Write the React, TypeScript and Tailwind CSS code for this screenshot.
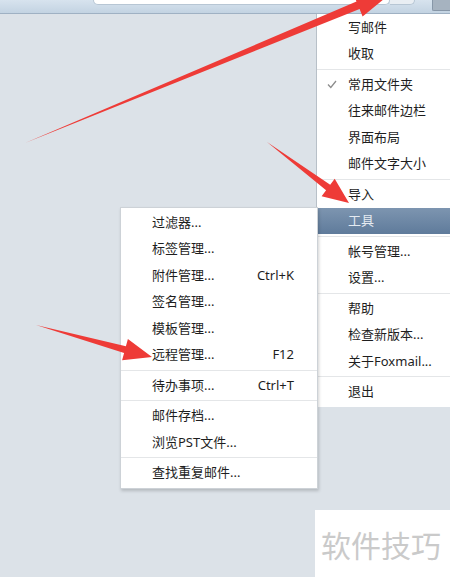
import React from 'react';

type Item = { label?: string; key?: string; checked?: boolean; active?: boolean; sep?: boolean };

const MAIN_MENU: Item[] = [
  { label: '写邮件' },
  { label: '收取' },
  { sep: true },
  { label: '常用文件夹', checked: true },
  { label: '往来邮件边栏' },
  { label: '界面布局' },
  { label: '邮件文字大小' },
  { sep: true },
  { label: '导入' },
  { label: '工具', active: true },
  { sep: true },
  { label: '帐号管理...' },
  { label: '设置...' },
  { sep: true },
  { label: '帮助' },
  { label: '检查新版本...' },
  { label: '关于Foxmail...' },
  { sep: true },
  { label: '退出' },
];

const TOOLS_MENU: Item[] = [
  { label: '过滤器...' },
  { label: '标签管理...' },
  { label: '附件管理...', key: 'Ctrl+K' },
  { label: '签名管理...' },
  { label: '模板管理...' },
  { label: '远程管理...', key: 'F12' },
  { sep: true },
  { label: '待办事项...', key: 'Ctrl+T' },
  { sep: true },
  { label: '邮件存档...' },
  { label: '浏览PST文件...' },
  { sep: true },
  { label: '查找重复邮件...' },
];

// tapered arrow: thin tail, thick shaft near the head, triangular head
function arrowPoints(tx: number, ty: number, hx: number, hy: number, shaft = 4, headLen = 30, headHalf = 12) {
  const dx = hx - tx;
  const dy = hy - ty;
  const len = Math.hypot(dx, dy);
  const ux = dx / len;
  const uy = dy / len;
  const nx = -uy;
  const ny = ux;
  const bx = hx - ux * headLen;
  const by = hy - uy * headLen;
  const pts = [
    [tx, ty],
    [bx + nx * shaft, by + ny * shaft],
    [bx + nx * headHalf, by + ny * headHalf],
    [hx, hy],
    [bx - nx * headHalf, by - ny * headHalf],
    [bx - nx * shaft, by - ny * shaft],
  ];
  return pts.map((p) => p.map((v) => v.toFixed(1)).join(',')).join(' ');
}

function MenuRows({ items, wide }: { items: Item[]; wide?: boolean }) {
  return (
    <>
      {items.map((it, i) =>
        it.sep ? (
          <div key={i} className="h-px my-[1.5px] bg-[#e4e6e8]" />
        ) : (
          <div
            key={i}
            className={
              'relative flex items-center h-[26.5px] ' +
              (wide ? 'pl-[31px] pr-[23px] ' : 'pl-[31px] ') +
              (it.active ? 'bg-gradient-to-b from-[#7d95b0] to-[#5f7b9b] text-[#e4eaf1]' : 'text-[#1e1e1e]')
            }
          >
            {it.checked && (
              <svg className="absolute left-[10px] top-[9px]" width="10" height="9" viewBox="0 0 10 9">
                <polyline points="1,4.5 3.8,7.5 9,1" fill="none" stroke="#8c8c8c" strokeWidth="1.3" />
              </svg>
            )}
            <span className="flex-1">{it.label}</span>
            {it.key && <span className="text-[#1e1e1e]">{it.key}</span>}
          </div>
        )
      )}
    </>
  );
}

export default function App() {
  return (
    <div className="relative w-[450px] h-[577px] overflow-hidden bg-[#dce2e8] font-['Noto_Sans','Noto_Sans_CJK_SC',sans-serif] text-[13px] leading-none">
      {/* toolbar strip */}
      <div className="flex items-start h-[14px] bg-gradient-to-b from-[#d7e3ee] to-[#c3d3e2] border-b border-[#9fb1c3]">
        <div className="w-[93px]" />
        <div className="w-[297px] h-[5px] bg-white rounded-b-[6px] border-b border-x border-[#b7c6d4]" />
        <div className="w-[25px] h-[5px] bg-[#e9eef3] rounded-br-[6px] border-b border-r border-[#b7c6d4]" />
        <div className="ml-auto w-[18px] h-[11px] bg-[#a6b3c0] border-l border-b border-[#8797a8] rounded-bl-[2px]" />
      </div>

      {/* main dropdown */}
      <div className="absolute left-[316px] top-[14px] w-[140px] bg-white border-l border-[#b8c0c8] pb-[1.5px]">
        <MenuRows items={MAIN_MENU} />
      </div>

      {/* tools submenu */}
      <div className="absolute left-[120px] top-[207px] w-[198px] bg-white border border-[#cdd2d7] pt-px pb-[1.5px] shadow-[1px_2px_3px_rgba(0,0,0,0.18)]">
        <MenuRows items={TOOLS_MENU} wide />
      </div>

      {/* watermark */}
      <div className="absolute left-[315px] top-[510px] w-[135px] h-[67px] bg-white flex items-center pl-[6px]">
        <span className="text-[30px] text-[#cacaca] font-['Noto_Sans_CJK_SC',sans-serif] tracking-[0px]">软件技巧</span>
      </div>

      {/* red annotation arrows */}
      <svg className="absolute inset-0 pointer-events-none" width="450" height="577" viewBox="0 0 450 577">
        <polygon points={arrowPoints(25, 143, 395, -10, 4, 40, 12)} fill="#ee3b37" />
        <polygon points={arrowPoints(267, 142, 349, 203, 3.5, 26, 11)} fill="#ee3b37" />
        <polygon points={arrowPoints(36, 325, 152, 357, 3.5, 28, 11)} fill="#ee3b37" />
      </svg>
    </div>
  );
}
